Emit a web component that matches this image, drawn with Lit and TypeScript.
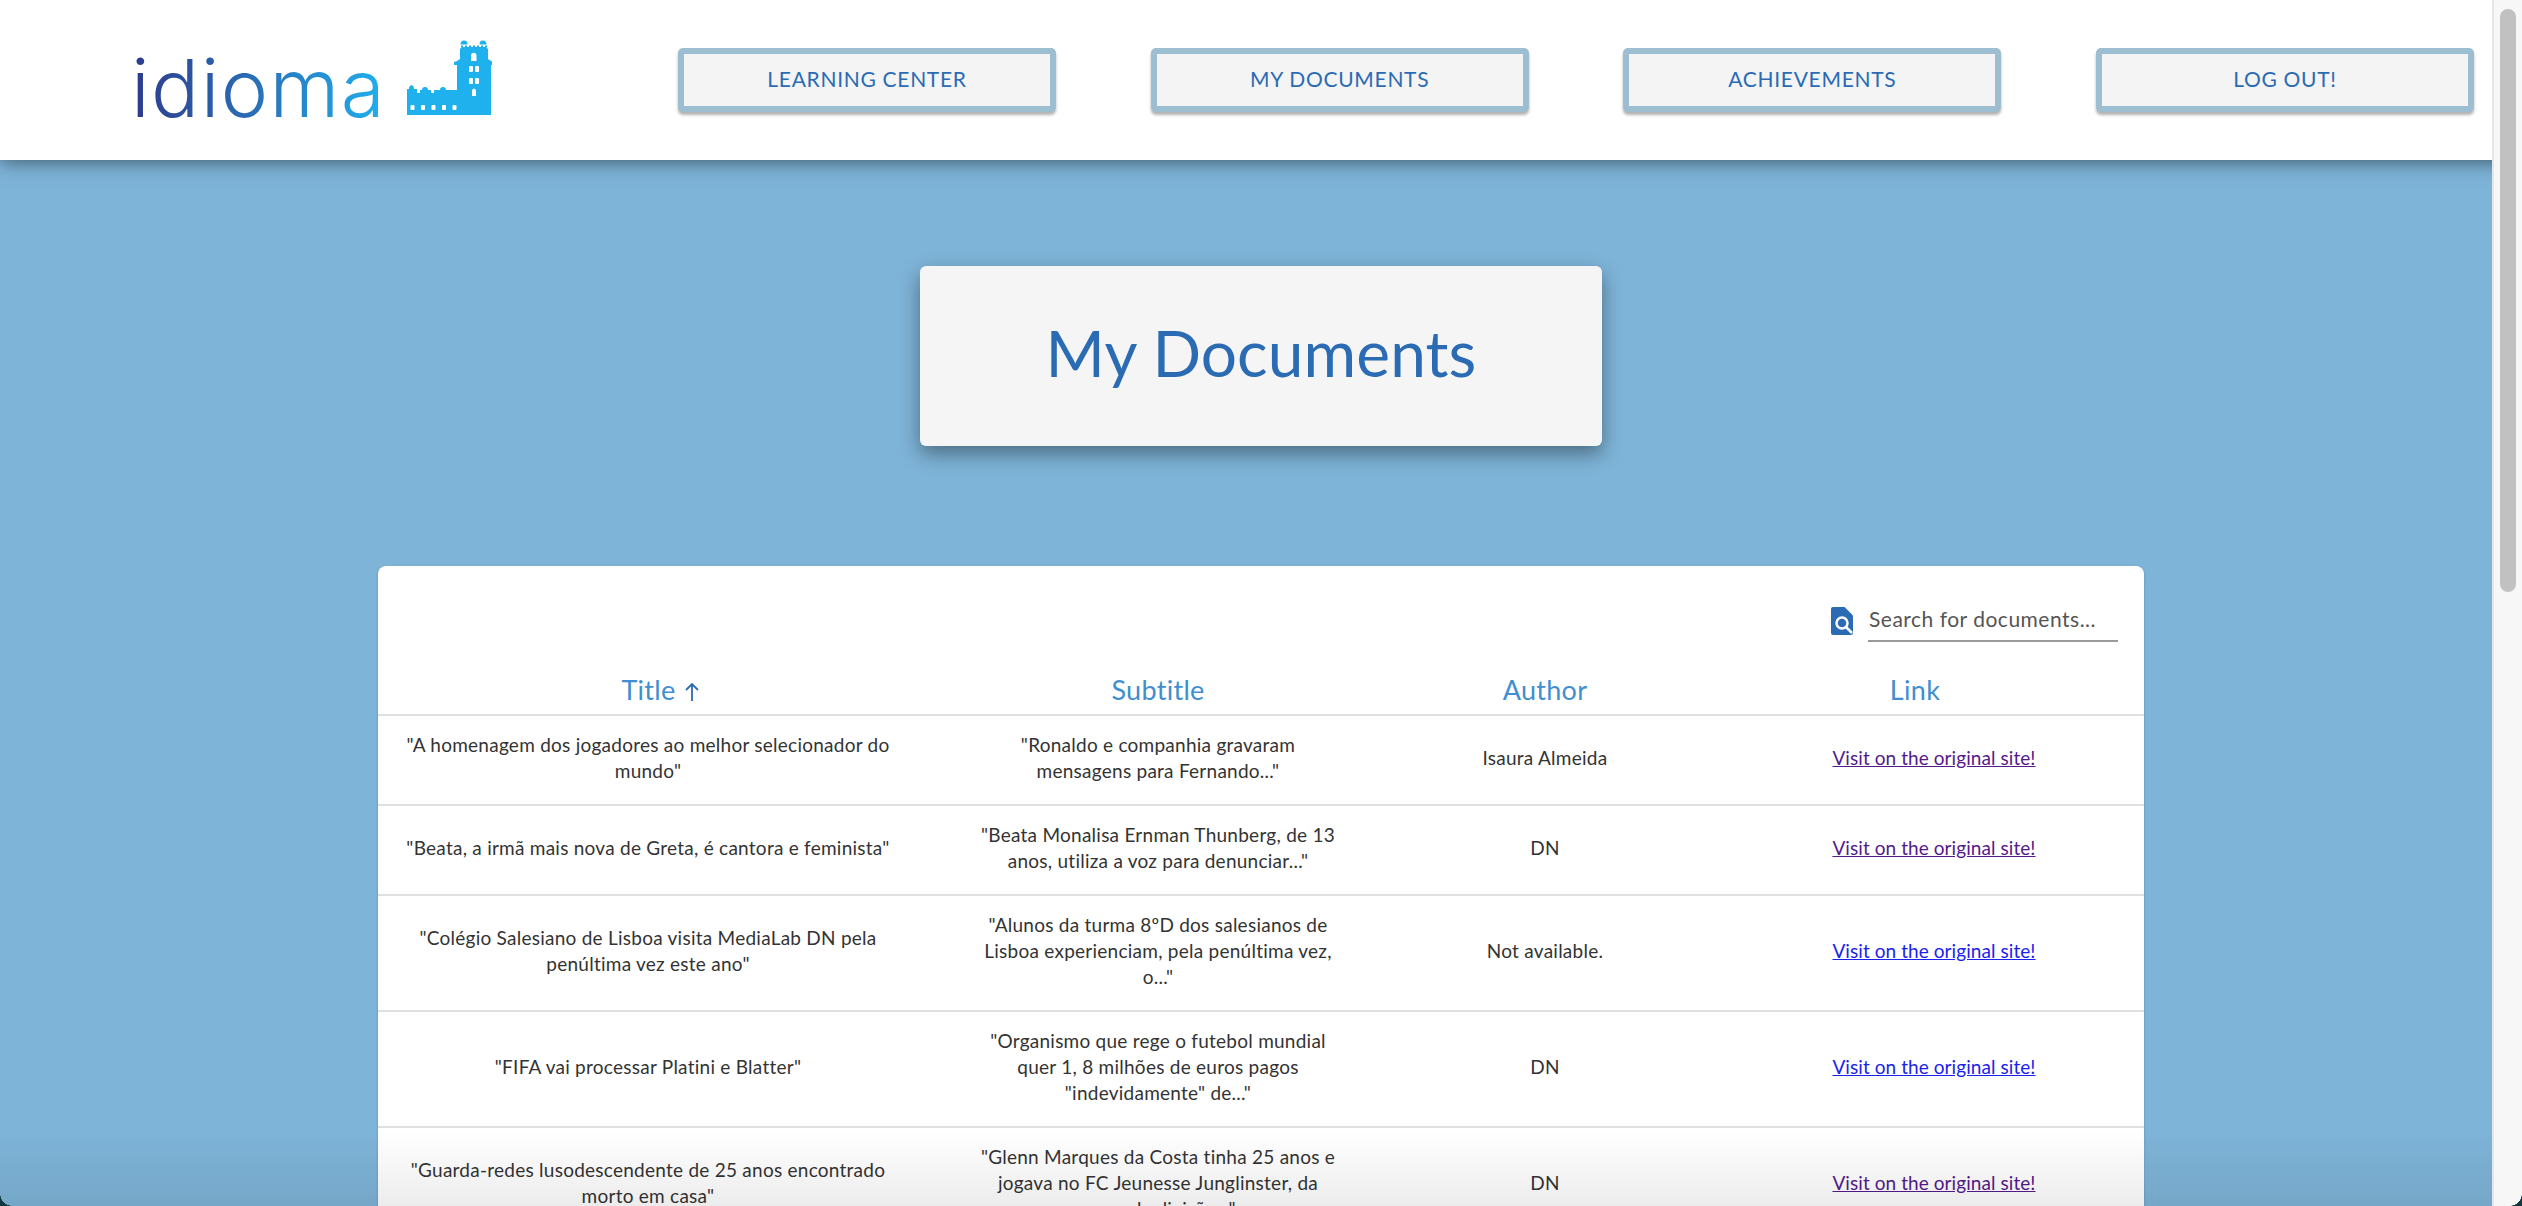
import { LitElement, html, css, svg } from "lit";
import { customElement } from "lit/decorators.js";

const rows = [
  {
    title: ['"A homenagem dos jogadores ao melhor selecionador do', 'mundo"'],
    subtitle: ['"Ronaldo e companhia gravaram', 'mensagens para Fernando..."'],
    author: "Isaura Almeida",
    visited: true,
  },
  {
    title: ['"Beata, a irmã mais nova de Greta, é cantora e feminista"'],
    subtitle: ['"Beata Monalisa Ernman Thunberg, de 13', 'anos, utiliza a voz para denunciar..."'],
    author: "DN",
    visited: true,
  },
  {
    title: ['"Colégio Salesiano de Lisboa visita MediaLab DN pela', 'penúltima vez este ano"'],
    subtitle: ['"Alunos da turma 8ºD dos salesianos de', 'Lisboa experienciam, pela penúltima vez,', 'o..."'],
    author: "Not available.",
    visited: false,
  },
  {
    title: ['"FIFA vai processar Platini e Blatter"'],
    subtitle: ['"Organismo que rege o futebol mundial', 'quer 1, 8 milhões de euros pagos', '"indevidamente" de..."'],
    author: "DN",
    visited: false,
  },
  {
    title: ['"Guarda-redes lusodescendente de 25 anos encontrado', 'morto em casa"'],
    subtitle: ['"Glenn Marques da Costa tinha 25 anos e', 'jogava no FC Jeunesse Junglinster, da', 'segunda divisão..."'],
    author: "DN",
    visited: true,
  },
];

const navItems = ["LEARNING CENTER", "MY DOCUMENTS", "ACHIEVEMENTS", "LOG OUT!"];

// belem tower, drawn by eye from the logo
const tower = svg`
  <svg class="tower" viewBox="0 0 85 75" width="85" height="75">
    <g fill="#1fb0ee">
      <path d="M0 75V49h2a2 3 0 0 1 5 0h3v4h3v-3h2a3 3 0 0 1 6 0h3v3h3v-3h6a3 3 0 0 1 6 0h11V25h-3v-3l3-1 3-2V9l2-2h24l2 2v10l3 2 3 1v3h-3v50z" />
      <path d="M53.500 4.500a3.500 4 0 0 1 7 0zM72.500 4.500a3.500 4 0 0 1 7 0z" />
      <path d="M54 5.500h2v2h-2zM58 5.500h2v2h-2zM62 5.500h2v2h-2zM66 5.500h2v2h-2zM70 5.500h2v2h-2zM74 5.500h2v2h-2zM78 5.500h2v2h-2z" />
    </g>
    <g fill="#fff">
      <rect x="3.5" y="65" width="4" height="5" rx="1" />
      <rect x="14" y="65" width="4" height="5" rx="1" />
      <rect x="24.500" y="65" width="4" height="5" rx="1" />
      <rect x="35" y="65" width="4" height="5" rx="1" />
      <rect x="45.500" y="65" width="4" height="5" rx="1" />
      <path d="M64 21v-5a2.500 3 0 0 1 5.500 0v5z" />
      <rect x="62" y="26" width="4" height="6" rx="1" />
      <rect x="68" y="26" width="4" height="6" rx="1" />
      <rect x="62" y="38" width="4" height="6" rx="1" />
      <rect x="68" y="38" width="4" height="6" rx="1" />
      <path d="M65 56v-5a2 2.500 0 0 1 4 0v5z" />
    </g>
  </svg>
`;

@customElement("app-root")
export class AppRoot extends LitElement {
  static styles = css`
    :host {
      display: block;
      position: relative;
      height: 100vh;
      overflow: hidden;
      background: #7eb4d8;
      font-family: "Lato", "Noto Sans", sans-serif;
    }

    header {
      position: relative;
      z-index: 2;
      display: flex;
      align-items: center;
      justify-content: space-between;
      height: 160px;
      padding: 0 48px 0 131px;
      background: #fff;
      box-shadow: 0 2px 18px rgba(0, 0, 0, 0.5);
    }

    .logo {
      display: flex;
      align-items: flex-end;
      gap: 21px;
      margin-bottom: 5px;
    }

    .logo-text {
      margin-bottom: -13px;
      font-family: "Inter", "Lato", sans-serif;
      font-size: 80px;
      font-weight: 300;
      line-height: 80px;
      letter-spacing: 1.4px;
      background: linear-gradient(90deg, #2e3a8c, #2a6bb3 45%, #20b0ee);
      -webkit-background-clip: text;
      background-clip: text;
      color: transparent;
    }

    .tower {
      display: block;
    }

    nav {
      display: flex;
      justify-content: space-between;
      width: 1796px;
    }

    nav a {
      box-sizing: border-box;
      display: flex;
      align-items: center;
      justify-content: center;
      width: 378px;
      height: 64px;
      padding-bottom: 4px;
      border: 6px solid #9dbdd0;
      border-radius: 5px;
      background: #f4f4f4;
      box-shadow: 0 3px 3px rgba(0, 0, 0, 0.3);
      color: #2a6bb3;
      font-size: 21px;
      letter-spacing: 0.7px;
    }

    main {
      display: flex;
      flex-direction: column;
      align-items: center;
      padding-top: 106px;
    }

    .page-title {
      box-sizing: border-box;
      display: flex;
      align-items: center;
      justify-content: center;
      width: 682px;
      height: 180px;
      padding-bottom: 7px;
      border-radius: 6px;
      background: #f5f5f5;
      box-shadow: 0 8px 20px rgba(0, 0, 0, 0.4);
    }

    h1 {
      margin: 0;
      font-size: 64px;
      font-weight: 400;
      color: #2a6bb3;
      letter-spacing: 0.1px;
    }

    .card {
      width: 1766px;
      margin-top: 120px;
      border-radius: 8px;
      background: #fff;
      box-shadow: 0 1px 3px rgba(0, 0, 0, 0.2);
    }

    .search {
      display: flex;
      justify-content: flex-end;
      align-items: center;
      gap: 15px;
      padding: 34px 26px 0 0;
    }

    .search svg {
      display: block;
    }

    .search input {
      box-sizing: border-box;
      width: 250px;
      height: 42px;
      padding: 0 0 3px 1px;
      border: none;
      border-bottom: 2px solid #9a9a9a;
      outline: none;
      font: 400 21px "Lato", "Noto Sans", sans-serif;
      letter-spacing: 0.5px;
      background: transparent;
    }

    .search input::placeholder {
      color: #555;
      opacity: 1;
    }

    .row {
      display: grid;
      grid-template-columns: 540px 480px 294px 452px;
      align-items: center;
      border-bottom: 2px solid #e0e0e0;
      text-align: center;
    }

    .row.head {
      height: 74px;
      box-sizing: border-box;
      padding-top: 33px;
      align-items: start;
      color: #3f8fd0;
      font-size: 27px;
      line-height: 30px;
      letter-spacing: 0.3px;
    }

    .sortable {
      display: flex;
      justify-content: center;
      align-items: center;
      gap: 8px;
      padding-left: 25px;
    }

    .sortable svg {
      margin-top: 4px;
    }

    .row.body {
      padding: 16px 0 20px;
      color: #333;
      font-size: 19px;
      line-height: 26px;
      letter-spacing: 0.25px;
      white-space: nowrap;
    }

    .link {
      padding-left: 32px;
    }

    .head .link {
      padding-left: 0;
      padding-right: 6px;
    }

    a.site {
      color: #1a22ee;
      text-decoration: underline;
      letter-spacing: 0.07px;
    }

    a.site.visited {
      color: #551a8b;
    }

    .fade {
      position: absolute;
      left: 0;
      right: 0;
      bottom: 0;
      height: 76px;
      z-index: 3;
      pointer-events: none;
      background: linear-gradient(rgba(0, 0, 0, 0), rgba(0, 0, 0, 0.075));
    }

    .scrollbar {
      position: absolute;
      top: 0;
      right: 0;
      bottom: 0;
      z-index: 4;
      box-sizing: border-box;
      width: 30px;
      border-left: 2px solid #e6e6e6;
      background: #f7f7f7;
    }

    .scrollbar div {
      width: 16px;
      height: 583px;
      margin: 9px 0 0 6px;
      border-radius: 8px;
      background: #c1c1c1;
    }

    .corner {
      position: absolute;
      bottom: 0;
      z-index: 5;
      width: 12px;
      height: 12px;
    }

    .corner.left {
      left: 0;
      background: radial-gradient(circle at 100% 0, transparent 11.500px, #12393f 12px);
    }

    .corner.right {
      right: 0;
      background: radial-gradient(circle at 0 0, transparent 11.500px, #12393f 12px);
    }
  `;

  render() {
    return html`
      <header>
        <div class="logo">
          <span class="logo-text">idioma</span>
          ${tower}
        </div>
        <nav>
          ${navItems.map((item) => html`<a>${item}</a>`)}
        </nav>
      </header>
      <main>
        <div class="page-title"><h1>My Documents</h1></div>
        <section class="card">
          <div class="search">
            <svg viewBox="0 0 22 28" width="22" height="28">
              <path
                fill="#2a6bb3"
                d="M2 0h11.500L22 8.500V26a2 2 0 0 1-2 2H2a2 2 0 0 1-2-2V2a2 2 0 0 1 2-2z"
              />
              <circle cx="11" cy="16" r="5.500" fill="none" stroke="#fff" stroke-width="2.500" />
              <path d="M15 20l6 6" stroke="#fff" stroke-width="2.500" />
            </svg>
            <input placeholder="Search for documents..." />
          </div>
          <div class="row head">
            <div class="sortable">
              Title
              <svg viewBox="0 0 16 18" width="16" height="18">
                <path d="M8 18V1M2 7l6-6 6 6" fill="none" stroke="#2a6bb3" stroke-width="1.800" />
              </svg>
            </div>
            <div>Subtitle</div>
            <div>Author</div>
            <div class="link">Link</div>
          </div>
          ${rows.map(
            (row) => html`
              <div class="row body">
                <div>${row.title.map((line) => html`${line}<br />`)}</div>
                <div>${row.subtitle.map((line) => html`${line}<br />`)}</div>
                <div>${row.author}</div>
                <div class="link">
                  <a class="site ${row.visited ? "visited" : ""}" href="#">Visit on the original site!</a>
                </div>
              </div>
            `
          )}
        </section>
      </main>
      <div class="fade"></div>
      <div class="scrollbar"><div></div></div>
      <div class="corner left"></div>
      <div class="corner right"></div>
    `;
  }
}
